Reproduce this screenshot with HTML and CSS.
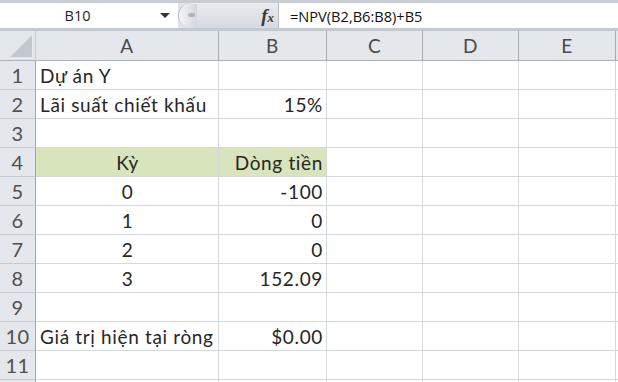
FILE: index.html
```html
<!DOCTYPE html>
<html lang="vi">
<head>
    <meta charset="UTF-8">
    <title>NPV - Dự án Y</title>
    <link rel="stylesheet" href="styles.css">
</head>
<body>
    <div class="formula-bar">
        <div class="name-box">
            <span class="name-text">B10</span>
            <span class="name-arrow"></span>
        </div>
        <div class="fx-area">
            <span class="grip"></span>
            <span class="fx"><i>f</i><small>x</small></span>
        </div>
        <div class="formula-input">=NPV(B2,B6:B8)+B5</div>
    </div>

    <div class="sheet">
        <!-- header row -->
        <div class="corner"><span class="corner-tri"></span></div>
        <div class="col-head">A</div>
        <div class="col-head">B</div>
        <div class="col-head">C</div>
        <div class="col-head">D</div>
        <div class="col-head">E</div>
        <div class="col-head"></div>

        <div class="row-head">1</div>
        <div class="cell">Dự án Y</div>
        <div class="cell"></div><div class="cell"></div><div class="cell"></div><div class="cell"></div><div class="cell"></div>

        <div class="row-head">2</div>
        <div class="cell">Lãi suất chiết khấu</div>
        <div class="cell num">15%</div>
        <div class="cell"></div><div class="cell"></div><div class="cell"></div><div class="cell"></div>

        <div class="row-head">3</div>
        <div class="cell"></div><div class="cell"></div><div class="cell"></div><div class="cell"></div><div class="cell"></div><div class="cell"></div>

        <div class="row-head">4</div>
        <div class="cell green center">Kỳ</div>
        <div class="cell green num">Dòng tiền</div>
        <div class="cell"></div><div class="cell"></div><div class="cell"></div><div class="cell"></div>

        <div class="row-head">5</div>
        <div class="cell center">0</div>
        <div class="cell num">-100</div>
        <div class="cell"></div><div class="cell"></div><div class="cell"></div><div class="cell"></div>

        <div class="row-head">6</div>
        <div class="cell center">1</div>
        <div class="cell num">0</div>
        <div class="cell"></div><div class="cell"></div><div class="cell"></div><div class="cell"></div>

        <div class="row-head">7</div>
        <div class="cell center">2</div>
        <div class="cell num">0</div>
        <div class="cell"></div><div class="cell"></div><div class="cell"></div><div class="cell"></div>

        <div class="row-head">8</div>
        <div class="cell center">3</div>
        <div class="cell num">152.09</div>
        <div class="cell"></div><div class="cell"></div><div class="cell"></div><div class="cell"></div>

        <div class="row-head">9</div>
        <div class="cell"></div><div class="cell"></div><div class="cell"></div><div class="cell"></div><div class="cell"></div><div class="cell"></div>

        <div class="row-head">10</div>
        <div class="cell">Giá trị hiện tại ròng</div>
        <div class="cell num">$0.00</div>
        <div class="cell"></div><div class="cell"></div><div class="cell"></div><div class="cell"></div>

        <div class="row-head">11</div>
        <div class="cell"></div><div class="cell"></div><div class="cell"></div><div class="cell"></div><div class="cell"></div><div class="cell"></div>

        <!-- row 12, only its top edge shows -->
        <div class="row-head"></div>
        <div class="cell"></div><div class="cell"></div><div class="cell"></div><div class="cell"></div><div class="cell"></div><div class="cell"></div>
    </div>
</body>
</html>
```

FILE: styles.css
```css
* {
    margin: 0;
    padding: 0;
    box-sizing: border-box;
}

body {
    width: 618px;
    height: 382px;
    overflow: hidden;
    background: #ffffff;
    font-family: 'Lato', sans-serif;
    color: #262626;
}

/* Formula bar */
.formula-bar {
    height: 31px;
    display: flex;
    align-items: stretch;
    background: #dfe3e8;
    border-top: 3px solid #c8cdd4;
    border-bottom: 3px solid #c3c9d1;
}

.name-box {
    width: 178px;
    background: #fff;
    display: flex;
    align-items: center;
    font-family: 'Open Sans', sans-serif;
    font-size: 14.5px;
    color: #222;
}

.name-text {
    width: 155px;
    text-align: center;
}

.name-arrow {
    margin-left: 5px;
    width: 0;
    height: 0;
    border-left: 5px solid transparent;
    border-right: 5px solid transparent;
    border-top: 5px solid #333;
}

.fx-area {
    width: 101px;
    display: flex;
    align-items: center;
    justify-content: space-between;
    padding-right: 4px;
    background: linear-gradient(#e9ecf0, #d6dae0);
    border-left: 1px solid #b7bdc6;
    border-right: 1px solid #b7bdc6;
    border-radius: 13px 0 0 13px;
}

.grip {
    width: 18px;
    height: 24px;
    border-radius: 12px 0 0 12px;
    background: linear-gradient(90deg, #f4f5f7, #d3d7dd);
    position: relative;
}

.grip::after {
    content: '';
    position: absolute;
    left: 9px;
    top: 9px;
    width: 7px;
    height: 4px;
    border-radius: 2px;
    background: #aeb4bd;
}

.fx {
    font-family: 'Liberation Serif', serif;
    font-size: 19px;
    font-weight: bold;
    color: #3a3a3a;
}

.fx small {
    font-size: 13px;
    font-style: italic;
}

.formula-input {
    flex: 1;
    background: #fff;
    padding-left: 11px;
    display: flex;
    align-items: center;
    font-family: 'Open Sans', sans-serif;
    font-size: 14.6px;
    color: #111;
}

/* Sheet grid */
.sheet {
    display: grid;
    grid-template-columns: 36px 183px 108px 96px 96px 97px 1fr;
    grid-template-rows: 30px repeat(12, 29px);
    height: 351px;
    overflow: hidden;
}

.corner,
.col-head,
.row-head {
    background: #e4e8ed;
    color: #4a4a4a;
    border-right: 1px solid #c5cbd3;
    border-bottom: 1px solid #aab1bb;
    display: flex;
    align-items: center;
    justify-content: center;
    font-size: 19px;
    letter-spacing: 0.5px;
}

.col-head {
    border-right: 1px solid #a5acb6;
}

.row-head {
    border-bottom: 1px solid #c5cbd3;
    border-right: 1px solid #9ea6b1;
    font-size: 20px;
    color: #505050;
}

.corner {
    justify-content: flex-end;
    align-items: flex-end;
    padding: 0 3px 3px 0;
}

.corner-tri {
    width: 0;
    height: 0;
    border-left: 22px solid transparent;
    border-bottom: 22px solid #c3c8cf;
}

.cell {
    border-right: 1px solid #d4d8de;
    border-bottom: 1px solid #d4d8de;
    display: flex;
    align-items: center;
    padding: 0 3px 0 4px;
    font-size: 19px;
    letter-spacing: 0.65px;
    white-space: nowrap;
    overflow: visible;
}

.center {
    justify-content: center;
}

.num {
    justify-content: flex-end;
}

.green {
    background: #d8e4bc;
}
```
